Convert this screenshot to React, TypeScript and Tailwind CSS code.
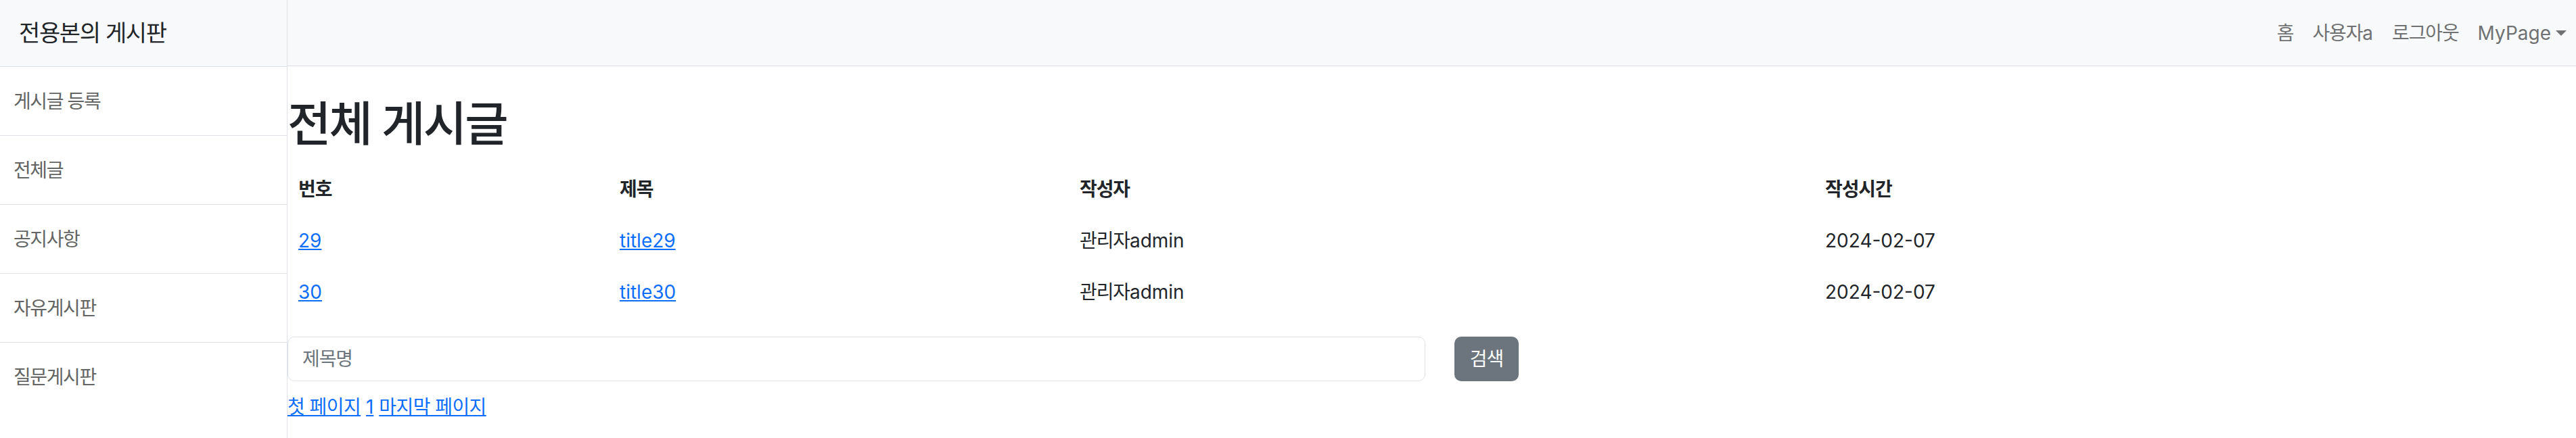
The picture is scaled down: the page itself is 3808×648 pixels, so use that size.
const menus = ["게시글 등록", "전체글", "공지사항", "자유게시판", "질문게시판"];

const posts = [
  { id: 29, title: "title29", writer: "관리자", writerId: "admin", date: "2024-02-07" },
  { id: 30, title: "title30", writer: "관리자", writerId: "admin", date: "2024-02-07" },
];

const App = () => {
  return (
    <div className="flex min-h-[648px] w-full bg-white font-['Inter','Noto_Sans_CJK_KR',sans-serif] text-[28px] leading-[42px] text-[#212529]">
      {/* SIDEBAR */}
      <aside className="w-[425px] shrink-0 border-r border-[#dee2e6] bg-white">
        <div className="flex h-[98px] items-center bg-[#f8f9fa] pl-[28px] text-[34px] tracking-[-0.04em]">
          전용본의 게시판
        </div>
        {menus.map((m) => (
          <a
            key={m}
            href="#"
            className="flex h-[102px] items-center border-t border-[#dee2e6] pl-[20px] text-[#636464] tracking-[-0.05em]"
          >
            {m}
          </a>
        ))}
      </aside>

      <div className="min-w-0 flex-1">
        {/* NAVBAR */}
        <nav className="flex h-[98px] items-center justify-end border-b border-[#dee2e6] bg-[#f8f9fa] text-[#707172]">
          <a href="#" className="px-[14px] tracking-[-0.04em]">
            홈
          </a>
          <a href="#" className="px-[14px]">
            <span className="tracking-[-0.04em]">사용자</span>a
          </a>
          <a href="#" className="px-[14px] tracking-[-0.04em]">
            로그아웃
          </a>
          <a href="#" className="flex items-center px-[14px]">
            MyPage
            <span className="ml-[7px] inline-block border-x-[8px] border-t-[8px] border-x-transparent border-t-[#707172]" />
          </a>
        </nav>

        <main>
          <h1 className="mt-[44px] mb-[16px] h-[84px] text-[70px] leading-[84px] font-medium tracking-[-0.04em]">
            전체 게시글
          </h1>

          {/* TABLE */}
          <table className="w-full table-fixed">
            <thead>
              <tr className="h-[76px]">
                <th className="w-[475px] px-[16px] text-left font-bold tracking-[-0.04em]">번호</th>
                <th className="w-[680px] px-[16px] text-left font-bold tracking-[-0.04em]">제목</th>
                <th className="w-[1102px] px-[16px] text-left font-bold tracking-[-0.04em]">작성자</th>
                <th className="px-[16px] text-left font-bold tracking-[-0.04em]">작성시간</th>
              </tr>
            </thead>
            <tbody>
              {posts.map((p) => (
                <tr key={p.id} className="h-[76px]">
                  <td className="px-[16px]">
                    <a href="#" className="text-[#0d6efd] underline">
                      {p.id}
                    </a>
                  </td>
                  <td className="px-[16px]">
                    <a href="#" className="text-[#0d6efd] underline">
                      {p.title}
                    </a>
                  </td>
                  <td className="px-[16px]">
                    <span className="tracking-[-0.04em]">{p.writer}</span>
                    {p.writerId}
                  </td>
                  <td className="px-[16px]">{p.date}</td>
                </tr>
              ))}
            </tbody>
          </table>

          {/* SEARCH */}
          <form className="mt-[28px] flex items-center" onSubmit={(e) => e.preventDefault()}>
            <input
              type="text"
              placeholder="제목명"
              className="h-[66px] w-[1682px] rounded-[10px] border border-[#dee2e6] px-[21px] text-[28px] tracking-[-0.04em] outline-none placeholder:text-[#6c757d]"
            />
            <button
              type="submit"
              className="ml-[43px] h-[66px] w-[95px] rounded-[10px] bg-[#6c757d] text-white tracking-[-0.04em]"
            >
              검색
            </button>
          </form>

          {/* PAGINATION */}
          <div className="mt-[17px] text-[#0d6efd]">
            <a href="#" className="underline tracking-[-0.02em]">
              첫 페이지
            </a>{" "}
            <a href="#" className="underline">
              1
            </a>{" "}
            <a href="#" className="underline tracking-[-0.02em]">
              마지막 페이지
            </a>
          </div>
        </main>
      </div>
    </div>
  );
};

export default App;
